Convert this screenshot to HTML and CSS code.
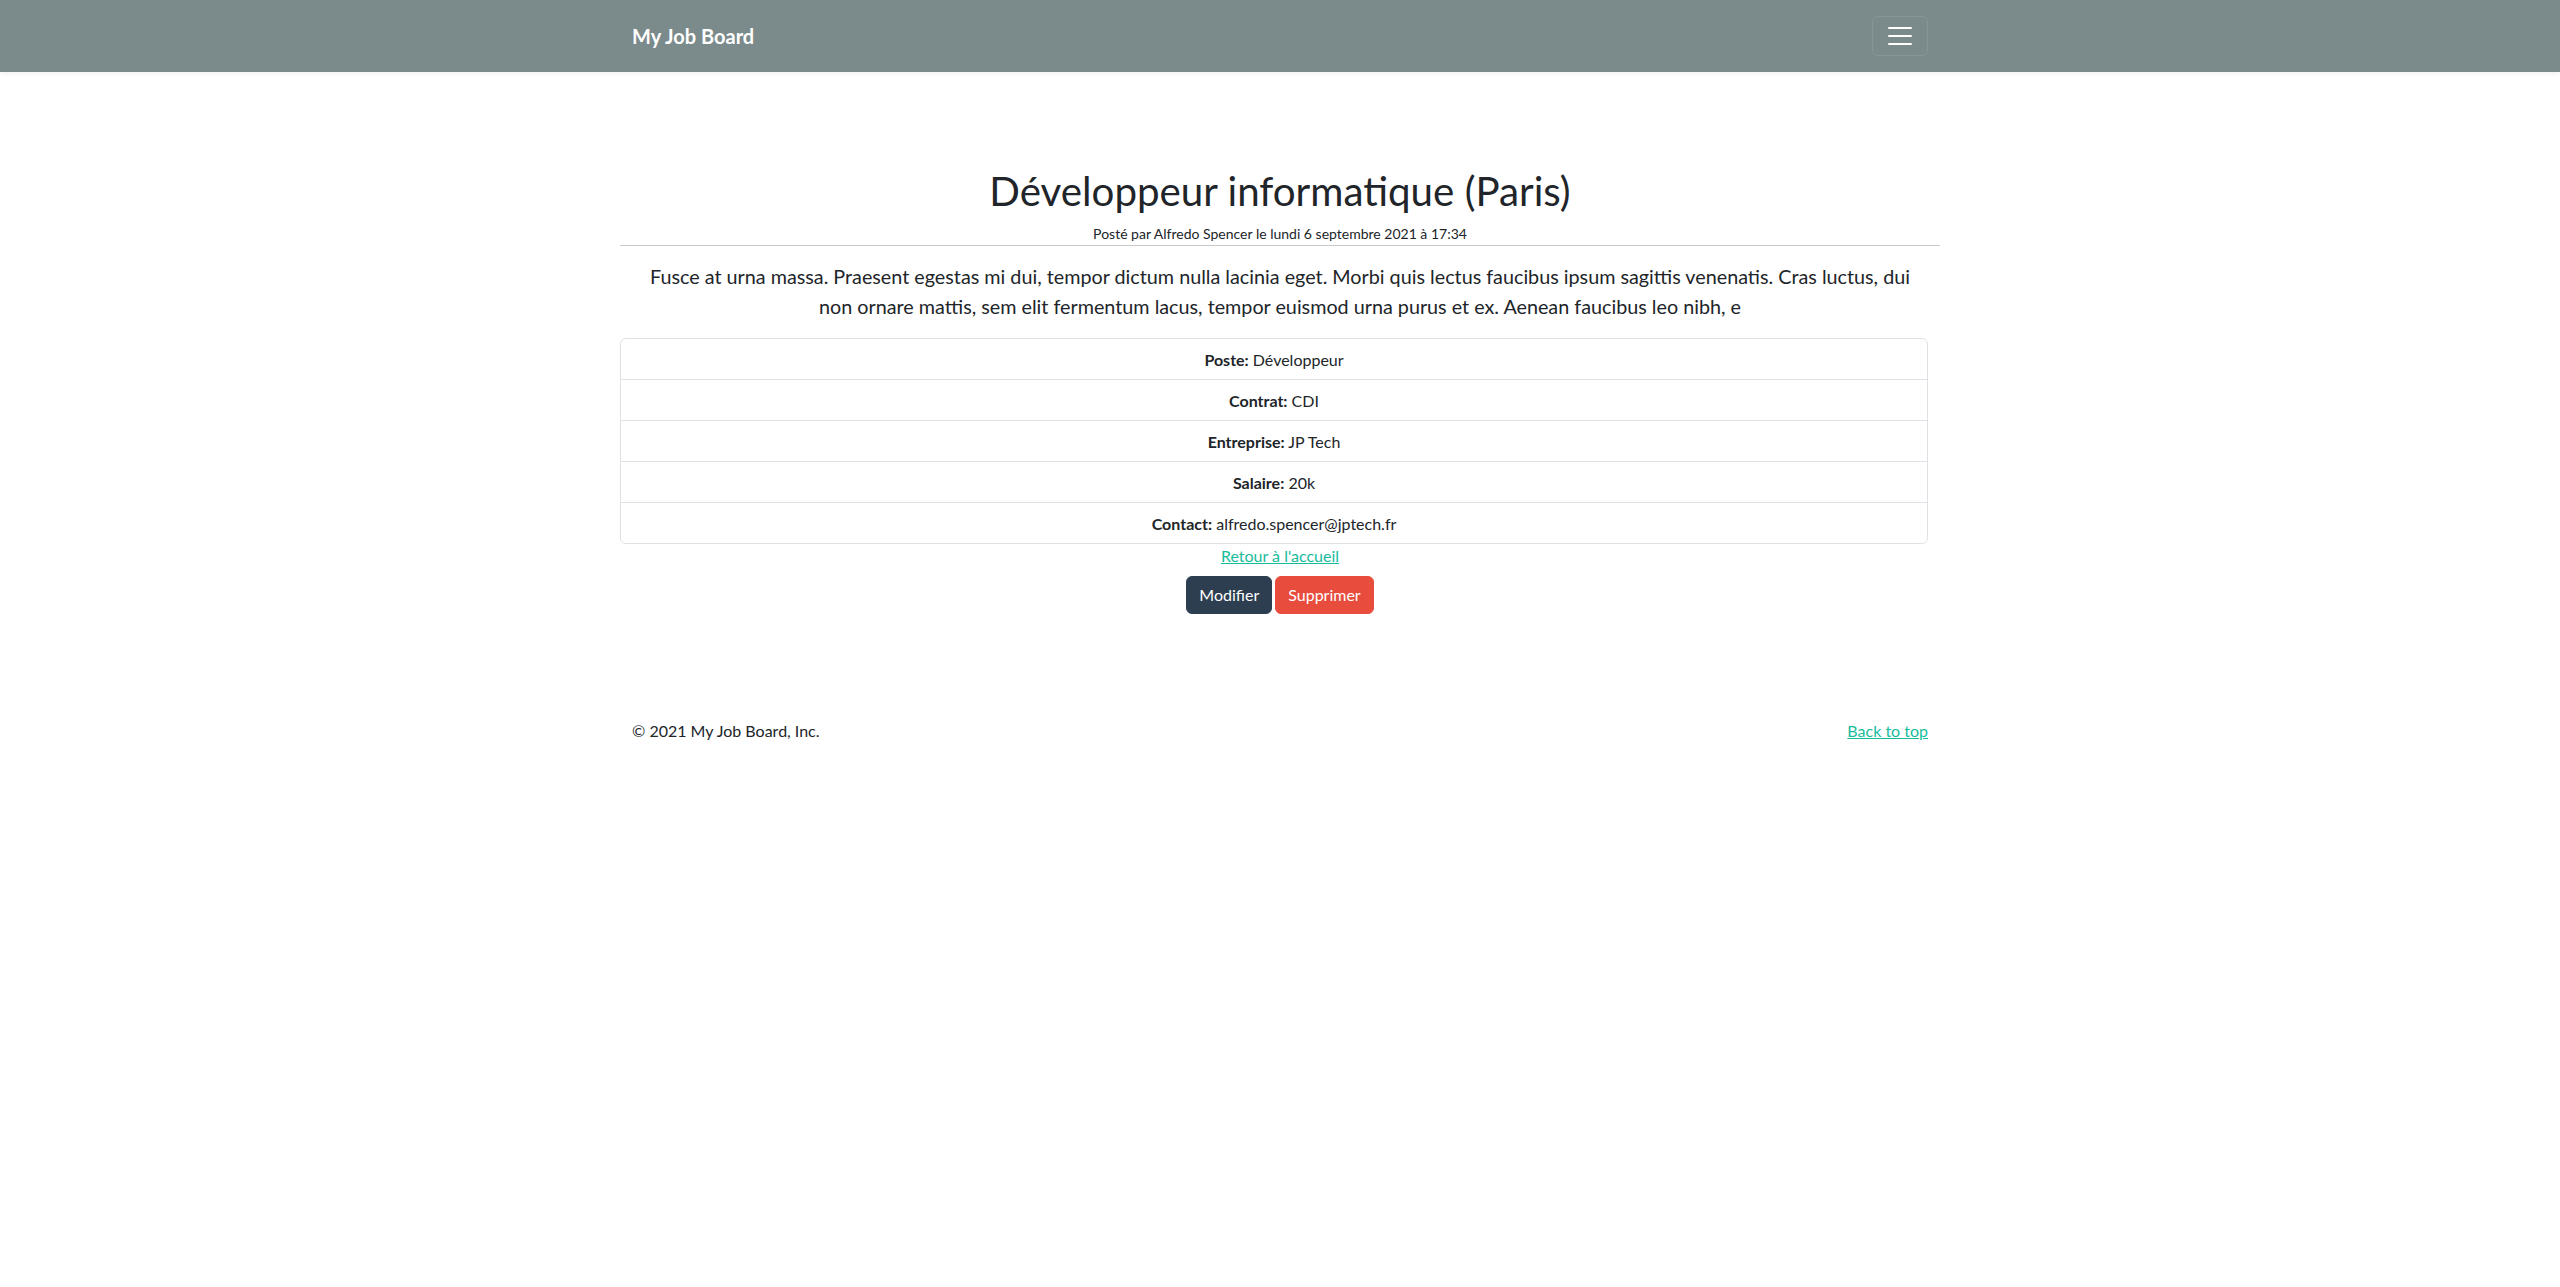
FILE: index.html
```html
<!DOCTYPE html>
<html lang="fr">
<head>
<meta charset="utf-8">
<title>My Job Board</title>
<link rel="stylesheet" href="styles.css">
</head>
<body>
<nav class="navbar">
  <div class="nav-inner">
    <a class="brand" href="#">My Job Board</a>
    <button class="toggler" type="button" aria-label="Menu">
      <svg class="toggler-icon" viewBox="0 0 30 30" width="30" height="30"><path stroke="#ffffff" stroke-linecap="round" stroke-miterlimit="10" stroke-width="2" d="M4 7h22M4 15h22M4 23h22"/></svg>
    </button>
  </div>
</nav>
<main class="container">
  <div class="head">
    <h1 class="title">Développeur informatique (Paris)</h1>
    <p class="meta">Posté par Alfredo Spencer le lundi 6 septembre 2021 à 17:34</p>
    <hr class="rule">
    <p class="lead">Fusce at urna massa. Praesent egestas mi dui, tempor dictum nulla lacinia eget. Morbi quis lectus faucibus ipsum sagittis venenatis. Cras luctus, dui non ornare mattis, sem elit fermentum lacus, tempor euismod urna purus et ex. Aenean faucibus leo nibh, e</p>
  </div>
  <ul class="details">
    <li class="item"><strong>Poste:</strong> Développeur</li>
    <li class="item"><strong>Contrat:</strong> CDI</li>
    <li class="item"><strong>Entreprise:</strong> JP Tech</li>
    <li class="item"><strong>Salaire:</strong> 20k</li>
    <li class="item"><strong>Contact:</strong> alfredo.spencer@jptech.fr</li>
  </ul>
  <div class="actions">
    <a class="link" href="#">Retour à l'accueil</a>
    <div class="btns">
      <button class="btn btn-primary" type="button">Modifier</button>
      <button class="btn btn-danger" type="button">Supprimer</button>
    </div>
  </div>
</main>
<footer class="container footer">
  <p class="copy">© 2021 My Job Board, Inc.</p>
  <a class="link" href="#">Back to top</a>
</footer>
</body>
</html>
```
FILE: styles.css
```css
* { box-sizing: border-box; }
html, body { margin: 0; padding: 0; }
body {
  font-family: Lato, "Open Sans", "Liberation Sans", sans-serif;
  font-size: 16px;
  line-height: 1.5;
  color: #212529;
  background: #fff;
}
.navbar {
  background: #7b8a8b;
  padding: 16px 0;
  box-shadow: 0 2px 4px rgba(0,0,0,0.05);
}
.nav-inner {
  width: 1320px;
  margin: 0 auto;
  padding: 0 12px;
  display: flex;
  align-items: center;
  justify-content: space-between;
}
.brand {
  color: #fff;
  font-size: 20px;
  font-weight: 700;
  text-decoration: none;
  line-height: 30px;
}
.toggler {
  width: 56px;
  height: 40px;
  padding: 4px 12px;
  background: transparent;
  border: 1px solid rgba(255,255,255,0.1);
  border-radius: 6px;
  display: flex;
  align-items: center;
  justify-content: center;
}
.toggler-icon { display: block; width: 30px; height: 30px; }
.container {
  width: 1320px;
  margin: 0 auto;
  padding: 0 12px;
}
.head {
  margin: 0 -12px;
  padding-top: 95px;
  text-align: center;
}
.title {
  margin: 0 0 8px;
  font-size: 40.3px;
  font-weight: 400;
  line-height: 48px;
}
.meta {
  margin: 0;
  font-size: 14px;
  line-height: 21px;
}
.rule {
  margin: 1px 0 16px;
  border: 0;
  border-top: 1px solid #c8c9cb;
  height: 0;
}
.lead {
  margin: 0 0 16px;
  padding: 0 12px;
  font-size: 19.75px;
  line-height: 30px;
}
.details {
  list-style: none;
  margin: 0 0 0 -12px;
  padding: 0;
  border: 1px solid #dee2e6;
  border-radius: 6px;
  text-align: center;
}
.item {
  padding: 9px 16px 7px;
  line-height: 24px;
  border-top: 1px solid #dee2e6;
}
.item:first-child { border-top: 0; }
.item strong { font-weight: 700; }
.actions {
  display: flex;
  flex-direction: column;
  align-items: center;
}
.link {
  color: #18bc9c;
  text-decoration: underline;
}
.btns {
  margin-top: 8px;
  display: flex;
  gap: 3px;
}
.btn {
  font-family: inherit;
  font-size: 16px;
  line-height: 24px;
  padding: 6px 12px;
  border: 1px solid transparent;
  border-radius: 6px;
  color: #fff;
}
.btn-primary { background: #2c3e50; border-color: #2c3e50; }
.btn-danger { background: #e74c3c; border-color: #e74c3c; }
.footer {
  margin-top: 105px;
  display: flex;
  justify-content: space-between;
  align-items: center;
}
.copy { margin: 0; }
```
